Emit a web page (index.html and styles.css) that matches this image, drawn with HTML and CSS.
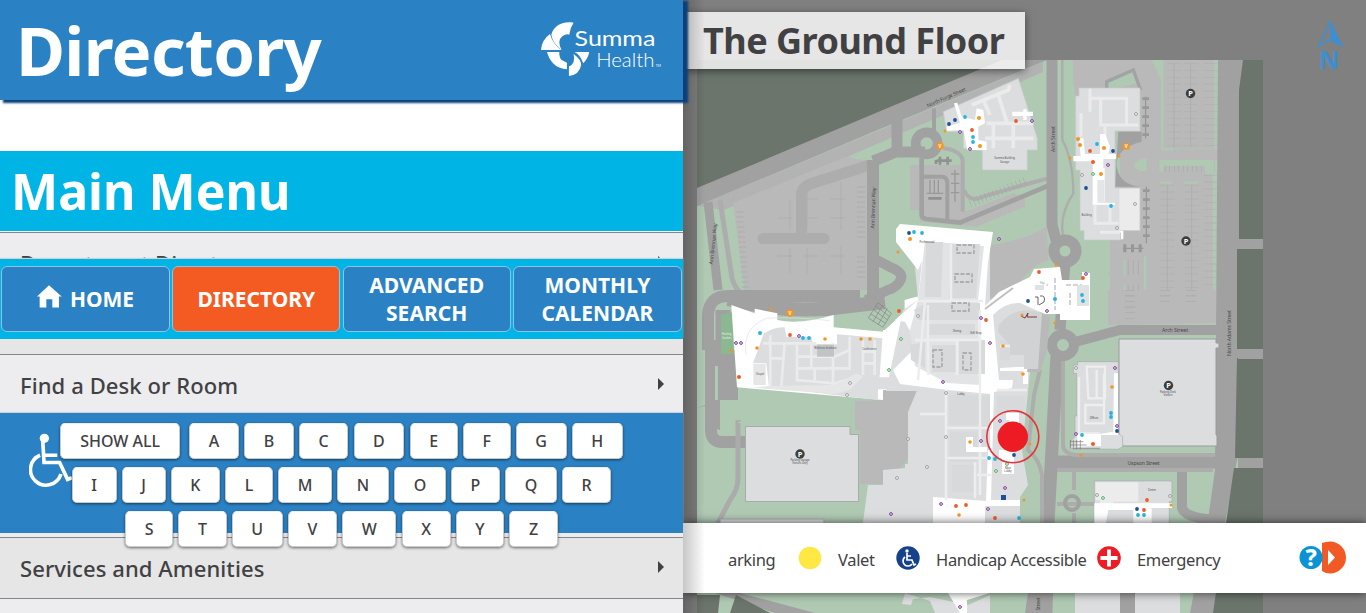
FILE: index.html
```html
<!DOCTYPE html>
<html lang="en">
<head>
<meta charset="utf-8">
<title>Directory</title>
<link rel="stylesheet" href="styles.css">
</head>
<body>
<div class="app">
<section class="panel">
  <header class="top">
    <h1>Directory</h1>
    <svg class="logo" viewBox="60 60 370 174" aria-label="Summa Health">
      <g fill="#fff">
        <path d="M161 68C125 62 100 80 94 104Q98 130 125 150Q110 122 128 108Q140 100 148 104Q150 84 161 68Z"/>
        <path d="M90 102Q65 120 63 150H124Q100 135 90 102Z"/>
        <path d="M81 156H118Q118 175 125 180Q135 185 141 188V208Q95 205 81 156Z"/>
        <path d="M208 156H164Q182 165 190 190Q205 175 208 156Z"/>
        <path d="M161 162Q185 180 184 195Q178 225 147 228V200Q168 190 161 162Z"/>
        <text x="164" y="138" font-size="66" textLength="243" lengthAdjust="spacingAndGlyphs">Summa</text>
        <text x="229" y="202" font-size="61" textLength="175" lengthAdjust="spacingAndGlyphs" class="thin">Health</text>
        <text x="408" y="201" font-size="10">TM</text>
      </g>
    </svg>
  </header>
  <h2 class="title">Main Menu</h2>
  <ul class="menu">
    <li>Department Directory</li>
    <li></li>
    <li>Find a Desk or Room</li>
    <li></li>
    <li></li>
    <li>Services and Amenities</li>
    <li></li>
  </ul>
  <nav class="tabs">
    <a><svg class="home" viewBox="0 0 75 68"><path fill="#fff" d="M36 0L74 34H66V67H46V42H28V67H8V34H0Z"/></svg>HOME</a>
    <a class="on">DIRECTORY</a>
    <a>ADVANCED<br>SEARCH</a>
    <a>MONTHLY<br>CALENDAR</a>
  </nav>
  <div class="keys">
    <svg class="chair" viewBox="88 68 132 166"><g fill="none" stroke="#fff" stroke-width="11"><path d="M129 90L133 157H180L204 208L217 203M133 135H173M121 135A47 47 0 1 0 184 192"/></g><circle cx="134" cy="84" r="14" fill="#fff"/></svg>
    <div class="row"><b class="all">SHOW ALL</b><b>A</b><b>B</b><b>C</b><b>D</b><b>E</b><b>F</b><b>G</b><b>H</b></div>
    <div class="row"><b>I</b><b>J</b><b>K</b><b>L</b><b>M</b><b>N</b><b>O</b><b>P</b><b>Q</b><b>R</b></div>
    <div class="row"><b>S</b><b>T</b><b>U</b><b>V</b><b>W</b><b>X</b><b>Y</b><b>Z</b></div>
  </div>
</section>

<section class="mapview">
<svg class="map" viewBox="683 0 683 613">
<defs>
  <pattern id="bays" width="17" height="19" patternUnits="userSpaceOnUse"><path d="M0 9H17M8 0V19" stroke="#a5a5a5" stroke-width=".5" fill="none"/></pattern>
  <pattern id="ticks" width="4" height="5" patternUnits="userSpaceOnUse"><path d="M0 2H4" stroke="#a3a3a3" stroke-width=".6"/></pattern>
  <g id="p"><circle r="4.7" fill="#3c3d3f"/><text y="2.7" font-size="7.5" font-weight="700" text-anchor="middle" fill="#fff">P</text></g>
</defs>
<rect x="697" y="60" width="566" height="553" fill="#afc9b3"/>
<path fill="#6b756c" d="M697 60H1020L913 100L697 189Z"/>
<path fill="#b3b3b3" d="M697 206L1043 62V72L893 137L724 210Z"/>
<path fill="#a1a1a1" d="M697 188L1002 60H1047L880 129L697 206Z"/>

<!-- west parking lot -->
<path fill="#b9b9b9" d="M733 203L848 156Q855 160 867 160V290L745 294Z"/>
<path fill="url(#ticks)" d="M736 212L742 290H749L743 208ZM857 185H865V240H857ZM857 256H865V280H857Z"/>
<g fill="url(#bays)"><path d="M777 200H792V230H777ZM777 248H792V274H777ZM803 192H818V230H803ZM803 248H818V274H803ZM830 182H845V230H830ZM830 246H845V274H830Z"/></g>
<path fill="none" stroke="#adadad" stroke-width="11" stroke-linecap="round" stroke-linejoin="round" d="M763 238.500H824"/>
<path fill="none" stroke="#adadad" stroke-width="11" d="M801.500 238V196Q801 188 810 184L870 165"/>
<g fill="none" stroke="#a1a1a1">
  <path stroke-width="12" d="M873 160V296"/>
  <path stroke-width="9" d="M708 202L718 290"/>
  <path stroke="#adadad" stroke-width="5" d="M720 200L732 278Q735 290 745 296"/>
  <path stroke-width="11" d="M873 161Q887 156 895 152H925M897 117V152"/>
  <path stroke-width="10" d="M873 258L890 267Q903 272 901 279Q898 287 888 290L866 300"/>
  <path stroke-width="12" d="M708 350V315Q709 296 728 296H860"/>
  <path stroke-width="14" d="M728 299L750 304Q800 314 850 306L885 302"/>
  <path stroke-width="15" d="M723 310V385"/>
  <path stroke-width="12" d="M711 340V430Q711 442 722 442H747"/>
  <path stroke-width="5" stroke="#ababab" d="M738 420V478Q738 490 730 500L717 525"/>
</g>
<path fill="#a1a1a1" d="M697 408L705 405V425L720 430V400H738V350H705V406Z"/>
<path fill="#b9b9b9" d="M737 401H855V430H860V484H890L910 455L925 430V376H885V390L872 401Z"/>
<path fill="#afc9b3" d="M738 417H855V419H738ZM738 422H855V423H738ZM715 366H718V400H715Z"/>
<path fill="#8bb791" d="M721 315L732 312L734 354H721Z"/>

<!-- north service area -->
<g transform="translate(880 60) scale(.3333)">
  <path fill="#b9b9b9" d="M90 315H255V455L400 400L435 410V440L290 500L120 485V450H90Z"/>
  <path fill="#b9b9b9" d="M310 560Q440 540 500 500L505 600Q440 620 400 700L300 720Z"/>
  <g fill="none" stroke="#a1a1a1">
    <path stroke-width="14" d="M125 295V465Q125 475 140 477L240 488L510 375"/>
    <path stroke-width="12" d="M130 350H185Q202 350 202 370V480"/>
    <path stroke="#adadad" stroke-width="12" d="M190 265Q240 270 248 300V455M252 390Q270 430 310 410L430 375L505 355"/>
    <path stroke="#adadad" stroke-width="7" d="M547 0V240Q580 300 580 400Q540 460 548 520L560 545M600 560H760M600 640Q650 615 690 640"/>
    <path stroke="#a1a1a1" stroke-width="12" d="M162 145V210"/>
  </g>
  <path d="M270 430L435 365" stroke="#a6a6a6" stroke-width="26" stroke-dasharray="1.500 11"/>
  <circle cx="140" cy="250" r="33" fill="none" stroke="#a1a1a1" stroke-width="29"/>
  <path d="M145 415H185M168 312V300M180 290V314M203 290V314M170 302H215" stroke="#919191" stroke-width="8"/>
  <path d="M150 360V400M163 360V400M175 360V400M140 400H190M213 342H238M213 370H238M213 398H238M225 330V425" stroke="#999" stroke-width="4"/>
</g>

<!-- east parking -->
<g transform="translate(1060 60) scale(.3333)">
  <path fill="#b9b9b9" d="M38 0H275L303 60V268H475V298H465V780H150V575H90V480L180 380V210H60L40 70Z"/>
  <path fill="#b9b9b9" d="M310 0H466V265H310Z"/>
  <path fill="#afc9b3" d="M280 0H308V60ZM225 310Q230 295 260 297V333Q225 335 222 315ZM298 300H462V342H435V318H310V335H298ZM140 70L218 35L230 70L150 90ZM60 540H150V640H60ZM92 635H145V780H92Z"/>
  <path d="M306 60V268H340M466 0V265M462 340V780M300 368H335M373 368H412M194 600V648M194 675V717M255 588V717M300 716H335M373 728H412M255 757V780M290 757V780" stroke="#afc9b3" stroke-width="7" fill="none"/>
  <path d="M342 10V262M392 10V262M322 375V710M395 375V720M205 600V645M220 600V645M235 600V645M205 675V717M220 675V717M235 675V717" stroke="#a9a9a9" stroke-width="2"/>
  <path d="M342 10V262M392 10V262M322 375V710M395 375V720M452 10V262M452 345V710" stroke="#adadad" stroke-width="42" stroke-dasharray="1.500 19"/>
  <path d="M315 326H435" stroke="#a4a4a4" stroke-width="18" stroke-dasharray="1.500 12"/>
  <path fill="none" stroke="#a3a3a3" stroke-width="10" d="M140 85V65L220 30L242 90"/>
  <path fill="#a1a1a1" d="M175 215H245V245Q165 265 170 320Q180 375 240 380H165Z"/>
  <path d="M257 110V235M259 380V550M190 565H250" stroke="#8f8f8f" stroke-width="3"/>
  <path d="M257 112V238M259 388V540" stroke="#999" stroke-width="20" stroke-dasharray="8 19"/>
  <path d="M190 565H250" stroke="#969696" stroke-width="24" stroke-dasharray="9 14"/>
</g>

<!-- main streets -->
<path fill="#a1a1a1" d="M1218 60H1243V90L1239 240V450L1225 523V613H1190L1208 520L1215 470Z"/>
<path fill="#6b756c" d="M1243 60H1263V239H1239V90ZM1239 249H1263V349H1237V249ZM1237 358H1263V458H1235ZM1234 468H1263V613H1213L1226 523Z"/>
<g fill="none" stroke="#a1a1a1">
  <path stroke-width="11" d="M1052 60V225L1056 240M1065 262L1060 330"/>
  <path stroke-width="13" d="M1057 356Q1053 430 1048 523L1046 613"/>
  <path stroke-width="10" d="M1075 342L1120 330H1217"/>
  <path stroke-width="13" d="M1055 462H1217"/>
  <path stroke-width="10" d="M1182 465V508Q1185 518 1215 520M1238 244H1263M1238 354H1263M1238 463H1263"/>
  <path stroke-width="4" stroke="#adadad" d="M1063 358V445Q1063 453 1075 455H1215M1040 370L1034 395L1028 450Q1040 460 1042 475V613M1057 470H1213M1074 470V490M1074 513V524M1057 504H1096"/>
  <circle cx="1065" cy="251" r="11" stroke-width="11"/>
  <circle cx="1063" cy="345" r="11" stroke-width="10"/>
  <circle cx="1072" cy="503" r="7" stroke-width="4"/>
</g>
<path fill="#b9b9b9" d="M1108 290H1216V323L1108 325Z"/>
<path d="M1130 290V320M1165 290V303M1191 290V303" stroke="#a5a5a5" stroke-width="10" stroke-dasharray=".6 5"/>

<!-- north building -->
<g transform="translate(880 60) scale(.3333)">
  <path fill="#dbdddf" stroke="#c8cacc" stroke-width="2" d="M190 155L415 55L472 235V270H442V330H307V272L250 265V215H200Z"/>
  <g fill="none" stroke="#ebebeb" stroke-width="11"><path d="M275 135L385 90L390 75M310 120L330 165M355 105L380 185M320 190H460M340 195V265M400 195V265M315 235H460"/></g>
  <path fill="#fff" d="M222 130L232 128L245 170L285 180L290 145L310 150L315 190L295 200V240L320 245V270H262L250 210L200 212V200L240 188ZM397 155H430V148H440V155H459V168H440V180H430V168H397Z"/>
  <text x="374" y="298" class="tiny">Summa Building</text><text x="374" y="309" class="tiny">Garage</text>
</g>

<!-- north-east building -->
<g transform="translate(1060 60) scale(.3333)">
  <path fill="#dbdddf" stroke="#c8cacc" stroke-width="2" d="M57 84H240V213H165V384H240V512H182V540H72V512H60V330H47V108H57Z"/>
  <path fill="#ebebeb" d="M178 386H238V510H178Z"/>
  <g fill="none" stroke="#ebebeb" stroke-width="9"><path d="M90 86V155M122 115V195H235M90 115H200V195M63 160V230M135 200V225M105 435V490H175M120 517H180M150 435V490"/></g>
  <path fill="#fff" d="M40 288H62L57 235H70L75 282H120V222H136L150 260L145 282H168V297H130V360H112V428H165V434H98V304H40ZM112 325H134V425H112ZM178 512H190V538H183V520Z"/>
  <path fill="#e4e5e6" d="M112 360H133V425H112Z"/>
  <text x="80" y="468" class="tiny">Building</text>
</g>

<!-- west building -->
<g transform="translate(683 290) scale(.3333)">
  <path fill="#fff" d="M145 45L215 70V56L283 70V90Q350 105 452 75V112L600 125L665 65V30L700 20H740V300H600V330L162 292Z"/>
  <path fill="#dbdddf" d="M243 130Q275 110 305 112L310 140H385L390 163H462V133L600 145V200L590 262H720V300H667V278H617V298H585V330L455 315L258 290L250 220H210Z"/>
  <g fill="none" stroke="#ebebeb" stroke-width="8"><path d="M240 160H400M262 135V290M305 160L295 290M342 160V270L455 280L530 260M345 235H500M385 160V235M345 200H455L500 180M450 160V290M500 140V240M540 150V255M575 150V255M540 185H575M540 220H575M265 205H300M395 235V275"/></g>
  <path fill="#e6e6e7" d="M211 222H248V285H211ZM205 293L455 312L500 300L540 260L520 250L455 285L260 288Z"/>
  <path fill="#c1c3c5" d="M402 164H453V200H402Z"/>
  <path fill="none" stroke="#e0e0e0" stroke-width="2" d="M190 195Q175 115 250 85Q340 80 440 92"/>
  <path fill="#fff" d="M600 120H675V180H655V195L720 245V265L590 260Z"/>
  <g stroke="#858585" fill="none" stroke-width="2"><path d="M585 38L625 70M578 48L620 80M572 60L614 90M564 72L608 100M556 84L600 112M585 38L556 84M600 45L570 95M613 55L585 105M625 70L600 112"/></g>
  <text x="427" y="178" class="tiny">Wellness Institute</text><text x="559" y="180" class="tiny">Conference</text><text x="231" y="254" class="tiny">Chapel</text>
  <text x="131" y="135" class="tiny lite">Healing</text><text x="131" y="148" class="tiny lite">Garden</text>
</g>

<!-- main hospital -->
<path fill="#dbdddf" d="M912 236L990 243V300L1012 290L1040 293L1040 370L1030 372L1022 450L1028 485L1020 497V523H905V545H860L868 485H883V470L905 468V464H908V412L923 376V391H886L903 310L918 300Z"/>
<path fill="#fff" d="M900 224L993 232L988 262L985 306L999 292L1030 277L1034 269L1060 267L1062 280H1082V272L1090 273V320H1060V314H1045L1020 303Q1005 302 993 315L999 380H1013L1012 388L994 392L991 500L1020 500V506H985V523H933V497L986 501L990 394L948 390L900 384L893 370L918 345L905 322L895 320L918 300L924 240L930 242L918 270L896 242V229Z"/>
<path fill="#e2e3e4" d="M925 241L984 246L978 300L980 385L947 383L915 366L910 330L918 300Z"/>
<path fill="#d7d9db" d="M926 242H943L941 297H925ZM952 244H980L976 298H949ZM914 310L926 303H980V320H918ZM928 324H975V335H928ZM910 345L925 342V368L911 360ZM932 345H956V372H932ZM959 340H985V374H959ZM949 395H985V425H949ZM950 432H977V462H950ZM952 465H974V492H952ZM980 395H990V450H980ZM1000 340H1010V360H1000ZM997 396H1025V415H997Z"/>
<g fill="none" stroke="#ededed" stroke-width="2.500"><path d="M951 244V300M918 301H983M928 305V375M946 390V500M980 310V495M915 340H980M957 340V375M946 428H992M946 458H992M920 414H946M975 462V498M977 475H991M925 302L918 380M1000 346H1025M997 390H1027"/></g>
<g fill="none" stroke="#9ea0a2" stroke-width="1.300" stroke-dasharray="4 1.500"><rect x="957" y="245" width="17" height="8"/><rect x="955" y="274" width="17" height="8"/><rect x="952" y="303" width="17" height="8"/><rect x="933" y="350" width="9" height="17"/><rect x="963" y="353" width="8" height="17"/></g>
<g fill="#fff"><path d="M966 437H973V447H987V452H966ZM999 450H1014V474H1002V458H999ZM1006 413H1019V423H1013V430H1009V420H1006ZM1018 367H1028V384H1023V371H1000V368ZM948 506H960V512H975V520H948Z"/></g>
<path fill="#b9b9b9" d="M1027 372L1033 322L1042 314L1050 317L1047 350L1040 372Z"/>
<path fill="#d0d2d3" d="M999 325Q1015 304 1042 313L1038 369H1024V355H1010V345L998 332Z"/>
<path fill="none" stroke="#555" stroke-width=".9" d="M1035 297H1038V305M1040 296Q1046 295 1044 302L1039 305"/>
<path fill="none" stroke="#7a3b35" stroke-width="1" d="M1021 316L1025 318L1028 313L1027 317L1037 317"/>
<path d="M1055 278V310M1066 285H1082M1070 293V305M1040 282L1048 285" stroke="#d0d2d4" stroke-width="2" stroke-dasharray="5 2"/>
<path fill="#e0e2e4" d="M1077 285H1089V306H1077ZM1035 285H1044V290H1035Z"/>
<path fill="none" stroke="#c0c0c0" stroke-width="2" d="M985 309L1013 288"/>

<!-- parking decks and south-east buildings -->
<path fill="#dbdddf" stroke="#a9aaac" stroke-width="1" d="M745.500 426.500H850V434.500H858.500V501.500H745.500ZM720 519H824V524H720Z"/>
<path fill="#dbdddf" stroke="#999b9d" stroke-width="1" d="M1119 339H1216V343H1219V348H1216V435H1217V446H1119Z"/>
<g transform="translate(900 290) scale(.3333)">
  <path fill="#dbdddf" stroke="#a9abad" stroke-width="2" d="M533 215H655V430L668 440V470L655 478L510 476V455L525 440V378H530V250H520V225H533Z"/>
  <path fill="none" stroke="#eee" stroke-width="7" d="M560 230H615V325H565ZM590 240V325M612 250V400H556V345H612M537 260V430H600"/>
  <path fill="#fff" d="M642 250H654V435H603V468H580L532 470V432H600L640 425Z"/>
  <path d="M510 455H550M510 465H560M520 475H600M512 450V475M520 450V478M530 450V478M541 450V478" stroke="#777" stroke-width="2"/>
  <path fill="#dbdddf" stroke="#a9abad" stroke-width="2" d="M583 573H816V635H808V700H583Z"/>
  <path fill="#ececec" d="M587 577H715V635H640V650H600V630H587Z"/>
  <path fill="#fff" d="M583 640H816V654H755V700H700V660H625L618 700H583Z"/>
</g>
<path fill="#dbdddf" d="M905 593L902 604L911 605L913 599L930 597L968 605L990 595V613H935L930 601ZM1075 593H1180V613H1075Z"/>
<path fill="#a1a1a1" d="M740 593L815 613H775L715 593ZM1028 593H1045V613H1025ZM1120 593H1135V613H1120Z"/>
<path fill="#6b756c" d="M697 595H720L718 613H697ZM736 595L770 613H730Z"/>
<path fill="#fff" d="M948 593H990L967 600V613H960Z"/>

<!-- markers -->
<g fill="#f7941e"><circle cx="940" cy="146" r="3.700"/><circle cx="790" cy="313" r="3.700"/><rect x="1123" y="143.500" width="6.500" height="6"/><circle cx="979" cy="118" r="2"/><circle cx="980" cy="146" r="2"/><circle cx="945" cy="131" r="1.500"/><circle cx="1078" cy="139" r="2"/><circle cx="1080" cy="145" r="2"/><circle cx="1104" cy="148" r="2"/><circle cx="1070" cy="158" r="1.500"/><circle cx="1119" cy="156" r="1.500"/><circle cx="1101" cy="174" r="2"/><circle cx="910" cy="239" r="2"/><circle cx="898" cy="252" r="1.500"/><circle cx="1056" cy="265" r="1.500"/><circle cx="771" cy="309" r="1.500"/><circle cx="757" cy="348" r="1.800"/><circle cx="731" cy="351" r="1.500"/><circle cx="825" cy="339" r="1.800"/><circle cx="861" cy="339" r="1.800"/><circle cx="870" cy="339" r="1.800"/><circle cx="1022" cy="315" r="1.500"/><circle cx="1003" cy="346" r="1.800"/><circle cx="1023" cy="374" r="1.800"/><circle cx="970" cy="442" r="1.800"/><circle cx="1030" cy="444" r="1.500"/><circle cx="1055" cy="323" r="1.500"/><circle cx="1112" cy="387" r="1.800"/><circle cx="1081" cy="455" r="1.500"/><circle cx="1024" cy="500" r="1.500"/><circle cx="959" cy="515" r="1.800"/><circle cx="1171" cy="505" r="1.500"/></g>
<g font-size="4.500" font-weight="700" text-anchor="middle" fill="#fff"><text x="940" y="147.600">V</text><text x="790" y="314.600">V</text><text x="1126.200" y="148.100">V</text></g>
<g fill="#f15a24"><circle cx="1016" cy="121" r="1.900"/><circle cx="972" cy="130" r="1.900"/><circle cx="1090" cy="151" r="1.900"/><circle cx="1093" cy="162" r="2"/><circle cx="1039" cy="272" r="1.900"/><circle cx="1083" cy="278" r="1.900"/><circle cx="899" cy="311" r="1.900"/><circle cx="790" cy="335" r="1.900"/><circle cx="739" cy="377" r="2"/><circle cx="986" cy="320" r="1.900"/><circle cx="1093" cy="444" r="2"/><circle cx="956" cy="506" r="1.900"/><circle cx="966" cy="505" r="1.900"/><circle cx="995" cy="518" r="1.900"/><circle cx="1147" cy="500" r="1.900"/><circle cx="1144" cy="510" r="1.900"/></g>
<g fill="#25b5df"><circle cx="965" cy="117" r="1.900"/><circle cx="973" cy="137" r="1.900"/><circle cx="973" cy="142" r="1.900"/><circle cx="1097" cy="144" r="1.900"/><circle cx="1111" cy="206" r="1.900"/><circle cx="914" cy="232" r="1.900"/><circle cx="922" cy="233" r="1.900"/><circle cx="1082" cy="295" r="1.900"/><circle cx="1083" cy="301" r="1.900"/><circle cx="1055" cy="299" r="2"/><circle cx="760" cy="333" r="2"/><circle cx="803" cy="338" r="1.900"/><circle cx="809" cy="338" r="1.900"/><circle cx="1111" cy="413" r="1.900"/><circle cx="1111" cy="417" r="1.900"/><circle cx="1082" cy="435" r="1.900"/><circle cx="989" cy="458" r="1.900"/><circle cx="995" cy="459" r="1.900"/><circle cx="1019" cy="518" r="1.900"/><circle cx="1138" cy="515" r="1.900"/><circle cx="1144" cy="515" r="1.900"/></g>
<g fill="#1f4f96"><circle cx="949" cy="124" r="1.900"/><circle cx="955" cy="120" r="1.900"/><circle cx="1113" cy="151" r="1.900"/><circle cx="1086" cy="188" r="1.900"/><circle cx="909" cy="233" r="1.900"/><circle cx="1028" cy="301" r="1.900"/><circle cx="1117" cy="431" r="1.900"/><circle cx="1014" cy="455" r="1.900"/><rect x="1001" y="495" width="5" height="5"/><circle cx="1137" cy="509" r="1.900"/></g>
<g fill="#efe5f2" stroke="#7b3f98" stroke-width="1"><circle cx="1032" cy="121" r="1.400"/><circle cx="960" cy="132" r="1.400"/><circle cx="970" cy="149" r="1.400"/><circle cx="1108" cy="165" r="1.400"/><circle cx="999" cy="239" r="1.400"/><circle cx="1086" cy="274" r="1.400"/><circle cx="736" cy="343" r="1.400"/><circle cx="741" cy="343" r="1.400"/><circle cx="799" cy="336" r="1.400"/><circle cx="981" cy="318" r="1.400"/><circle cx="1047" cy="311" r="1.400"/><circle cx="990" cy="343" r="1.400"/><circle cx="943" cy="382" r="1.400"/><circle cx="1000" cy="421" r="1.400"/><circle cx="981" cy="441" r="1.400"/><circle cx="1115" cy="368" r="1.400"/><circle cx="1117" cy="426" r="1.400"/><circle cx="1076" cy="434" r="1.400"/><circle cx="1005" cy="488" r="1.400"/><circle cx="941" cy="504" r="1.400"/><circle cx="988" cy="509" r="1.400"/><circle cx="891" cy="514" r="1.400"/><circle cx="960" cy="607" r="1.400"/></g>
<g fill="#fff" stroke="#4fae58" stroke-width="1"><circle cx="1093" cy="174" r="1.400"/><circle cx="901" cy="339" r="1.400"/><circle cx="889" cy="370" r="1.400"/><circle cx="996" cy="471" r="1.400"/><circle cx="1007" cy="464" r="1.400"/><circle cx="1103" cy="498" r="1.400"/></g>
<g fill="#eee" stroke="#8a8a8a" stroke-width=".7"><circle cx="1136" cy="114" r="1.500"/><circle cx="1135" cy="204" r="1.500"/><circle cx="1117" cy="228" r="1.500"/><circle cx="1082" cy="175" r="1.500"/><circle cx="850" cy="383" r="1.500"/><circle cx="847" cy="395" r="1.500"/><circle cx="908" cy="439" r="1.500"/><circle cx="897" cy="478" r="1.500"/><circle cx="918" cy="316" r="1.500"/><circle cx="946" cy="393" r="1.500"/><circle cx="946" cy="437" r="1.500"/><circle cx="927" cy="467" r="1.500"/><circle cx="1076" cy="368" r="1.500"/><circle cx="1097" cy="495" r="1.500"/><circle cx="1170" cy="496" r="1.500"/></g>
<use href="#p" x="1190.500" y="93.500"/><use href="#p" x="1186" y="241"/><use href="#p" x="1168.500" y="385.500"/><use href="#p" x="800" y="454"/>
<g class="street" text-anchor="middle">
  <text transform="translate(947 99) rotate(-24)" textLength="42">North Forge Street</text>
  <text transform="translate(1055 139) rotate(-90)" textLength="26">Arch Street</text>
  <text transform="translate(875 208) rotate(-88)" textLength="41">Ann Brennan Way</text>
  <text transform="translate(715 244) rotate(-84)" textLength="41">Ann Brennan Way</text>
  <text transform="translate(1231 333) rotate(-90)" textLength="46">North Adams Street</text>
  <text x="1175" y="332" textLength="26">Arch Street</text>
  <text x="1143.500" y="465" textLength="32">Uspson Street</text>
  <text transform="translate(1040 604) rotate(-90)" textLength="13">Street</text>
</g>
<g class="micro"><text x="1168" y="393">Parking Deck</text><text x="1168" y="396">Visitors</text><text x="800" y="461">Parking Garage</text><text x="800" y="464">Visitors Only</text><text x="927" y="243">Professional</text><text x="957" y="332">Dining</text><text x="976" y="334">Gift Shop</text><text x="961" y="395">Lobby</text><text x="1008" y="469">Main</text><text x="1008" y="472">Lobby</text><text x="1094" y="419">Offices</text><text x="1152" y="491">Center</text></g>

<!-- selected place -->
<circle cx="1012.800" cy="436.700" r="26" fill="none" stroke="#e53138" stroke-width="1.600"/>
<circle cx="1012.800" cy="436.700" r="15.200" fill="#ed1c24"/>
<!-- compass -->
<g fill="#3f8fd0" stroke="#3f8fd0"><path fill="none" stroke-width="1.600" d="M1330 22L1318.500 46L1330 39.500L1341.500 46Z"/><path stroke="none" d="M1330 20V39.500L1343 47.500Z"/><text x="1329" y="69" font-size="25" font-weight="700" text-anchor="middle" stroke="none">N</text></g>
</svg>
<h2 class="floor">The Ground Floor</h2>
<footer class="legend">
  <span class="item cut"><i>arking</i></span>
  <span class="item valet"><svg viewBox="-12 -12 24 24"><circle r="11.300" fill="#ffe844"/></svg><i>Valet</i></span>
  <span class="item access"><svg viewBox="-12 -12 24 24"><circle r="11.700" fill="#16418b"/><g fill="none" stroke="#fff" stroke-width="1.700"><path d="M-1-5V2H4L6 7L8 6M-1-2H3M-3-1A5 5 0 1 0 4 6"/></g><circle cx="-1" cy="-7" r="1.700" fill="#fff"/></svg><i>Handicap Accessible</i></span>
  <span class="item emer"><svg viewBox="-12 -12 24 24"><circle r="11.800" fill="#ed1c24"/><path d="M-8.500 0H8.500M0-8.500V8.500" stroke="#fff" stroke-width="3.800"/></svg><i>Emergency</i></span>
  <svg class="help" viewBox="1298 540 50 36"><path fill="#f15a24" d="M1322 543Q1326 541.500 1330 541.500A16 16 0 0 1 1330 573.500Q1326 573.500 1322 571Z"/><circle cx="1311" cy="557.500" r="11.500" fill="#0b93d5"/><path fill="#fff" d="M1328 550L1335 557.500L1328 565Z"/><text x="1311" y="566" font-size="23" font-weight="800" text-anchor="middle" fill="#fff">?</text></svg>
</footer>
<div class="edge"></div>
</section>
</div>
</body>
</html>
```
FILE: styles.css
```css
* { box-sizing: border-box; }
body { margin: 0; font-family: "Noto Sans", "Open Sans", sans-serif; color: #414143; }
.app { display: flex; width: 1366px; height: 613px; overflow: hidden; }
h1, h2 { margin: 0; font-weight: 700; }

.panel { position: relative; z-index: 2; width: 683px; height: 613px; background: #fff; }
.top { position: relative; display: flex; justify-content: space-between; height: 100px; padding: 0 20px 0 16px; background: #2a82c5; box-shadow: 4px 2px 2px 1px #0b4079; }
.top h1 { color: #fff; font-size: 67px; line-height: 100px; letter-spacing: -.7px; }
.logo { width: 123px; height: 58px; margin-top: 20px; font-family: Lato, "Noto Sans", sans-serif; }
.thin { font-weight: 300; }
.title { height: 81px; margin-top: 51px; padding-left: 11px; border-bottom: 1px solid #fff; background: #00b5e6; color: #fff; font-size: 50px; line-height: 80px; }
.menu { height: 381px; margin: 0; padding: 0; overflow: hidden; list-style: none; font-size: 22px; font-weight: 500; letter-spacing: .09px; }
.menu li { display: flex; align-items: center; justify-content: space-between; height: 61px; padding: 0 19px 1px 20px; border-top: 1px solid #85868a; background: #ededef; }
.menu li:nth-child(even) { background: #e6e6e6; }
.menu li::after { content: ""; border: 6px solid transparent; border-left-color: #414143; border-right: 0; margin-top: -1px; }

.tabs { position: absolute; top: 259px; left: 0; display: grid; grid-template-columns: 169px 168px 168px 169px; gap: 2.33px; width: 683px; height: 80px; padding: 7px 1px; background: #00b5e6; box-shadow: 0 -1px 1px #cfd1d2; }
.tabs a { display: flex; align-items: center; justify-content: center; border: 1px solid #8cc4ea; border-radius: 6px; background: #2a82c5; color: #fff; font-size: 21px; font-weight: 700; line-height: 28px; text-align: center; }
.tabs .on { background: #f35b22; }
.home { width: 25px; height: 23px; margin: -6px 8px 0 0; }

.keys { position: absolute; top: 413px; left: 0; width: 683px; height: 120px; padding-top: 10px; background: #2a82c5; box-shadow: 0 -1px 1px #cfd1d2; }
.chair { position: absolute; left: 29px; top: 20px; width: 44px; height: 55px; }
.row { position: relative; display: flex; justify-content: center; gap: 5.2px; height: 36px; margin-bottom: 8px; }
.row b { display: flex; align-items: center; justify-content: center; padding: 0 18.6px; border: 1px solid #c9cacb; border-top-color: #eee; border-radius: 5px; background: #fff; box-shadow: 0 1px 3px rgba(0,0,0,.55); font-size: 16px; font-weight: 500; }
.row .all { margin-right: 4px; padding: 0 19px; }

.mapview { position: relative; width: 683px; height: 613px; background: #808080; }
.map { display: block; width: 683px; height: 613px; }
.tiny { font-size: 8px; text-anchor: middle; fill: #555; }
.lite { fill: #e8f2e8; }
.street { font-size: 5.2px; fill: #4a4a4a; }
.micro { font-size: 2.6px; text-anchor: middle; fill: #444; }
.floor { position: absolute; left: 0; top: 12px; width: 342px; height: 57px; padding-left: 20px; background: rgba(255,255,255,.8); box-shadow: 0 2px 8px rgba(0,0,0,.5); font-size: 36px; line-height: 58px; letter-spacing: -.5px; white-space: nowrap; }
.legend { position: absolute; left: 0; top: 523px; display: flex; align-items: center; width: 683px; height: 70px; background: #fff; box-shadow: 0 0 9px rgba(0,0,0,.65); font-size: 16.5px; letter-spacing: -.35px; }
.item { display: flex; align-items: center; white-space: nowrap; }
.item i { font-style: normal; padding-top: 2px; }
.item svg { width: 24px; height: 24px; }
.cut { width: 70px; margin-left: 45px; }
.valet { width: 98px; gap: 16px; }
.access { width: 201px; gap: 16px; }
.emer { gap: 16px; }
.help { width: 50px; height: 36px; margin: 0 18px 0 auto; }
.edge { position: absolute; left: 0; top: 0; width: 22px; height: 613px; background: linear-gradient(90deg, rgba(0,0,0,.22), transparent); }
```
